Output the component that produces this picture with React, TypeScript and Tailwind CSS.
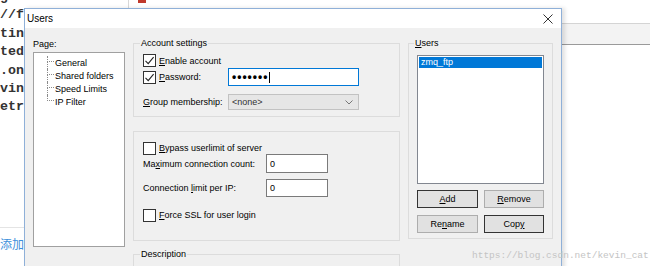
import React from 'react';

// only the slice of the blog's code that peeks out from behind the dialog
const codeLines = ['g.setConnectTimeout(3000);', '//f', 'tin', 'ted', '.on', 'vin', 'etr'];

const CheckBox: React.FC<{ checked?: boolean }> = ({ checked }) => (
  <span className="flex h-[13px] w-[13px] shrink-0 items-center justify-center border border-[#333] bg-white">
    {checked && (
      <svg viewBox="0 0 11 11" className="h-[11px] w-[11px]">
        <path d="M1.5 5.8 L4.2 8.6 L9.6 2.2" fill="none" stroke="#222" strokeWidth="1.1" />
      </svg>
    )}
  </span>
);

const Btn: React.FC<{ dark?: boolean; children: React.ReactNode }> = ({ dark, children }) => (
  <div
    className={
      dark
        ? 'flex h-[18px] items-center justify-center border border-[#333] bg-[#e1e1e1]'
        : 'flex h-[18px] items-center justify-center border border-[#adadad] bg-[#e1e1e1]'
    }
  >
    {children}
  </div>
);

const treeItems = ['General', 'Shared folders', 'Speed Limits', 'IP Filter'];

const PageTree: React.FC = () => (
  <div className="mt-[2px] h-[195px] border border-[#a0a0a0] bg-white pl-[13px] pt-[3px]">
    {treeItems.map((item, i) => (
      <div key={item} className="flex h-[13px] items-center">
        <div className="flex h-[13px] w-[7px] flex-col">
          <div className="h-[6px] border-b border-l border-dotted border-[#8a8a8a]" />
          {i < treeItems.length - 1 && <div className="h-[7px] border-l border-dotted border-[#8a8a8a]" />}
        </div>
        <span className="ml-[1px] leading-[12px]">{item}</span>
      </div>
    ))}
  </div>
);

// blog page behind the dialog
const Backdrop: React.FC = () => (
  <div className="flex h-full">
    <div className="flex w-[129px] flex-col overflow-hidden border-r border-[#d8d8d8]">
      <div className="-mt-[12px] whitespace-pre font-['Liberation_Mono',monospace] text-[13.3px] font-bold leading-[18.4px] text-[#333]">
        {codeLines.map((l) => (
          <div key={l}>{l}</div>
        ))}
      </div>
      <div className="mt-[110px] w-[24px] border-t border-[#e4e4e4]" />
      <div className="mt-[8px] w-[30px] overflow-hidden whitespace-nowrap font-['Noto_Sans_CJK_SC',sans-serif] text-[12px] leading-[16px] text-[#3d8fdb]">添加标</div>
    </div>
    <div className="flex flex-1 flex-col">
      <div className="ml-[9px] h-[3px] w-[8px] bg-[#c0392b]" />
      <div className="h-[21px] border-b border-[#d4d4d4]" />
      <div className="h-[21px] border-b border-[#9a9a9a] bg-[#f3f3f3]" />
    </div>
  </div>
);

const UsersDialog: React.FC = () => (
  <div className="absolute left-[24px] top-[8px] flex h-[290px] w-[538px] flex-col border border-[#8fb0d8] bg-[#f0f0f0] font-['Segoe_UI','Liberation_Sans',Arial,sans-serif] text-[9px] leading-[12px] text-black shadow-[3px_0_4px_rgba(0,0,0,0.12)]">
    <div className="flex h-[19px] shrink-0 items-center justify-between bg-white pl-[2px] pr-[8px]">
      <span className="text-[10px]">Users</span>
      <svg viewBox="0 0 10 10" className="h-[10px] w-[10px]">
        <path d="M0.5 0.5 L9.5 9.5 M9.5 0.5 L0.5 9.5" stroke="#333" strokeWidth="1" />
      </svg>
    </div>

    <div className="flex gap-[8px] px-[8px] pt-[9px]">
      {/* page tree */}
      <div className="flex w-[92px] flex-col">
        <div className="mt-[1px] h-[12px]">Page:</div>
        <PageTree />
      </div>

      {/* settings */}
      <div className="flex w-[267px] flex-col">
        <fieldset className="border border-[#dcdcdc] px-[9px] pb-[6px]">
          <legend className="-ml-[3px] px-[1px] leading-[12px]">Account settings</legend>
          <div className="mt-[5px] flex h-[13px] items-center">
            <CheckBox checked />
            <span className="ml-[3px]">
              <u>E</u>nable account
            </span>
          </div>
          <div className="mt-[1px] flex h-[18px] items-center">
            <div className="flex w-[85px] items-center">
              <CheckBox checked />
              <span className="ml-[3px]">
                <u>P</u>assword:
              </span>
            </div>
            <div className="flex h-[18px] w-[131px] items-center border border-[#0078d7] bg-white pl-[3px]">
              <span className="text-[12px] font-bold leading-[12px] tracking-[1px]">•••••••</span>
              <span className="ml-[1px] h-[11px] w-[1px] bg-black" />
            </div>
          </div>
          <div className="mt-[8px] flex h-[16px] items-center">
            <span className="w-[85px]">
              <u>G</u>roup membership:
            </span>
            <div className="flex h-[16px] w-[131px] items-center justify-between border border-[#c2c2c2] bg-[#e6e6e6] pl-[3px] pr-[5px] text-[#333]">
              <span>&lt;none&gt;</span>
              <svg viewBox="0 0 8 5" className="h-[5px] w-[8px]">
                <path d="M0.5 0.5 L4 4 L7.5 0.5" fill="none" stroke="#777" strokeWidth="1" />
              </svg>
            </div>
          </div>
        </fieldset>

        <div className="mt-[14px] border border-[#dcdcdc] px-[9px] pb-[19px] pt-[10px]">
          <div className="flex h-[12px] items-center">
            <CheckBox />
            <span className="ml-[3px]">
              <u>B</u>ypass userlimit of server
            </span>
          </div>
          <div className="flex h-[19px] items-center">
            <span className="w-[123px]">
              Ma<u>x</u>imum connection count:
            </span>
            <div className="flex h-[19px] w-[62px] items-center border border-[#7a7a7a] bg-white pl-[3px]">0</div>
          </div>
          <div className="mt-[6px] flex h-[18px] items-center">
            <span className="w-[123px]">
              Connection <u>l</u>imit per IP:
            </span>
            <div className="flex h-[18px] w-[62px] items-center border border-[#7a7a7a] bg-white pl-[3px]">0</div>
          </div>
          <div className="mt-[12px] flex h-[12px] items-center">
            <CheckBox />
            <span className="ml-[3px]">
              <u>F</u>orce SSL for user login
            </span>
          </div>
        </div>

        <fieldset className="mt-[7px] h-[40px] border border-[#dcdcdc] px-[9px]">
          <legend className="-ml-[3px] px-[1px] leading-[12px]">Description</legend>
        </fieldset>
      </div>

      {/* users */}
      <div className="flex w-[145px] flex-col">
        <fieldset className="border border-[#dcdcdc] px-[8px] pb-[5px]">
          <legend className="-ml-[3px] px-[1px] leading-[12px]">
            <u>U</u>sers
          </legend>
          <div className="mt-[6px] h-[129px] border border-[#828790] bg-white p-[1px]">
            <div className="h-[11px] bg-[#0078d7] pl-[2px] leading-[11px] text-white">zmq_ftp</div>
          </div>
          <div className="mt-[6px] grid grid-cols-[61px_60px] gap-x-[6px] gap-y-[7px]">
            <Btn dark>
              <u>A</u>dd
            </Btn>
            <Btn>
              <u>R</u>emove
            </Btn>
            <Btn>
              Re<u>n</u>ame
            </Btn>
            <Btn dark>
              Cop<u>y</u>
            </Btn>
          </div>
        </fieldset>
      </div>
    </div>
  </div>
);

export default function App() {
  return (
    <div className="relative h-[266px] w-[650px] overflow-hidden bg-white">
      <Backdrop />
      <UsersDialog />
      <div className="pointer-events-none absolute left-[472px] top-[250px] font-['Liberation_Mono',monospace] text-[9.5px] leading-[12px] text-[#c4c4c4]">
        https://blog.csdn.net/kevin_cat
      </div>
    </div>
  );
}
